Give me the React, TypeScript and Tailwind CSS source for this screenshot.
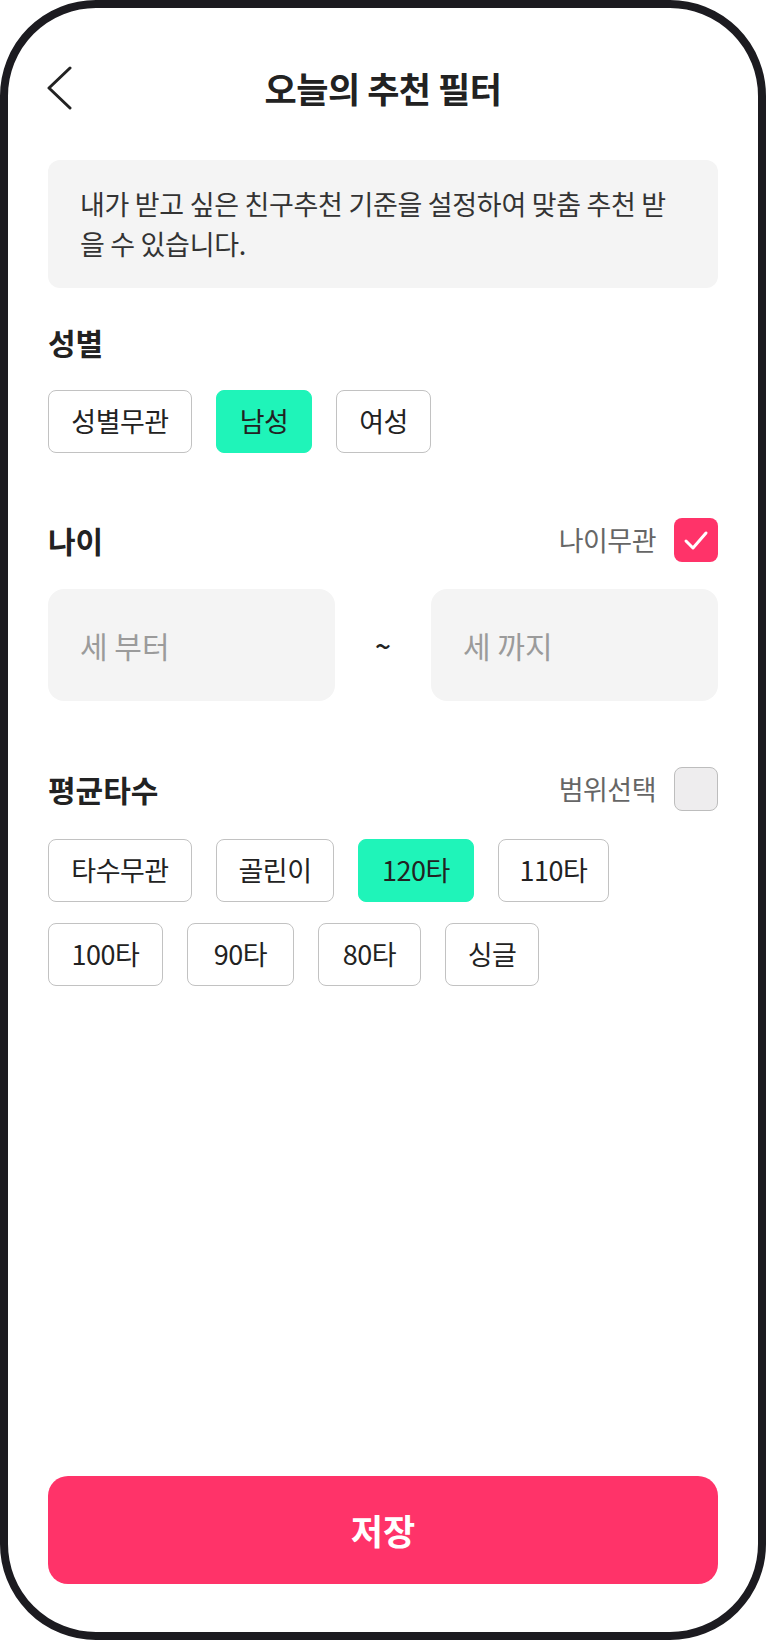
import { useState } from 'react';

const genders = [
  { label: '성별무관', w: 'w-[144px]' },
  { label: '남성', w: 'w-[96px]' },
  { label: '여성', w: 'w-[95px]' },
];

const scores = [
  { label: '타수무관', w: 'w-[144px]' },
  { label: '골린이', w: 'w-[118px]' },
  { label: '120타', w: 'w-[116px]' },
  { label: '110타', w: 'w-[111px]' },
  { label: '100타', w: 'w-[115px]' },
  { label: '90타', w: 'w-[107px]' },
  { label: '80타', w: 'w-[103px]' },
  { label: '싱글', w: 'w-[94px]' },
];

function Chip({ label, w, active, onClick }: { label: string; w: string; active: boolean; onClick: () => void }) {
  return (
    <button
      onClick={onClick}
      className={`${w} h-[63px] rounded-[8px] text-[27px] text-[#222] flex items-center justify-center tracking-[-0.5px] ${
        active ? 'bg-[#1ff4b9] border-[1.5px] border-[#1ff4b9]' : 'bg-white border-[1.5px] border-[#c2c2c2]'
      }`}
    >
      {label}
    </button>
  );
}

function CheckBox({ checked, onClick }: { checked: boolean; onClick: () => void }) {
  return (
    <button
      onClick={onClick}
      className={`w-[44px] h-[44px] rounded-[8px] flex items-center justify-center ${
        checked ? 'bg-[#ff3369]' : 'bg-[#eeedee] border-[1.5px] border-[#bdbdbd]'
      }`}
    >
      {checked && (
        <svg width="44" height="44" viewBox="0 0 44 44" fill="none">
          <path d="M12 23L19 30L32 15" stroke="white" strokeWidth="3" strokeLinecap="round" strokeLinejoin="round" />
        </svg>
      )}
    </button>
  );
}

export default function App() {
  const [gender, setGender] = useState('남성');
  const [score, setScore] = useState('120타');
  const [anyAge, setAnyAge] = useState(true);
  const [range, setRange] = useState(false);

  return (
    <div className="h-screen bg-white font-['Noto_Sans_CJK_KR',sans-serif]">
      <div className="h-full border-8 border-[#1c1b20] rounded-[96px] flex flex-col px-[40px] pt-[44px] pb-[48px]">
        {/* header */}
        <div className="grid grid-cols-[60px_1fr_60px] items-center h-[72px]">
          <svg width="26" height="44" viewBox="0 0 26 44" fill="none" className="-ml-[1px]">
            <path d="M23 2L2 22L23 42" stroke="#222" strokeWidth="3" strokeLinecap="round" strokeLinejoin="round" />
          </svg>
          <h1 className="text-center text-[35px] font-bold text-[#222] tracking-[-0.5px]">오늘의 추천 필터</h1>
          <div />
        </div>

        {/* info */}
        <div className="mt-[36px] bg-[#f4f4f4] rounded-[12px] pl-[32px] pr-[28px] py-[24px] text-[27px] leading-[40px] text-[#333] tracking-[-0.3px]">
          내가 받고 싶은 친구추천 기준을 설정하여 맞춤 추천 받을 수 있습니다.
        </div>

        {/* gender */}
        <h2 className="mt-[36px] text-[30px] leading-[36px] font-bold text-[#222]">성별</h2>
        <div className="mt-[30px] flex gap-[24px]">
          {genders.map((g) => (
            <Chip key={g.label} label={g.label} w={g.w} active={gender === g.label} onClick={() => setGender(g.label)} />
          ))}
        </div>

        {/* age */}
        <div className="mt-[65px] flex items-center justify-between h-[44px]">
          <h2 className="text-[30px] leading-[36px] font-bold text-[#222]">나이</h2>
          <label className="flex items-center gap-[18px] cursor-pointer">
            <span className="text-[27px] text-[#666] tracking-[-0.5px]">나이무관</span>
            <CheckBox checked={anyAge} onClick={() => setAnyAge(!anyAge)} />
          </label>
        </div>
        <div className="mt-[27px] flex items-center justify-between">
          <input
            placeholder="세 부터"
            className="w-[287px] h-[112px] rounded-[16px] bg-[#f4f4f4] px-[32px] text-[30px] text-[#222] placeholder:text-[#9b9b9b] outline-none"
          />
          <span className="text-[28px] font-medium text-[#222]">~</span>
          <input
            placeholder="세 까지"
            className="w-[287px] h-[112px] rounded-[16px] bg-[#f4f4f4] px-[32px] text-[30px] text-[#222] placeholder:text-[#9b9b9b] outline-none"
          />
        </div>

        {/* average score */}
        <div className="mt-[66px] flex items-center justify-between h-[44px]">
          <h2 className="text-[30px] leading-[36px] font-bold text-[#222]">평균타수</h2>
          <label className="flex items-center gap-[18px] cursor-pointer">
            <span className="text-[27px] text-[#666] tracking-[-0.5px]">범위선택</span>
            <CheckBox checked={range} onClick={() => setRange(!range)} />
          </label>
        </div>
        <div className="mt-[28px] flex flex-wrap gap-x-[24px] gap-y-[21px] pr-[80px]">
          {scores.map((s) => (
            <Chip key={s.label} label={s.label} w={s.w} active={score === s.label} onClick={() => setScore(s.label)} />
          ))}
        </div>

        <button className="mt-auto h-[108px] rounded-[20px] bg-[#ff3369] text-white text-[35px] font-bold">저장</button>
      </div>
    </div>
  );
}
